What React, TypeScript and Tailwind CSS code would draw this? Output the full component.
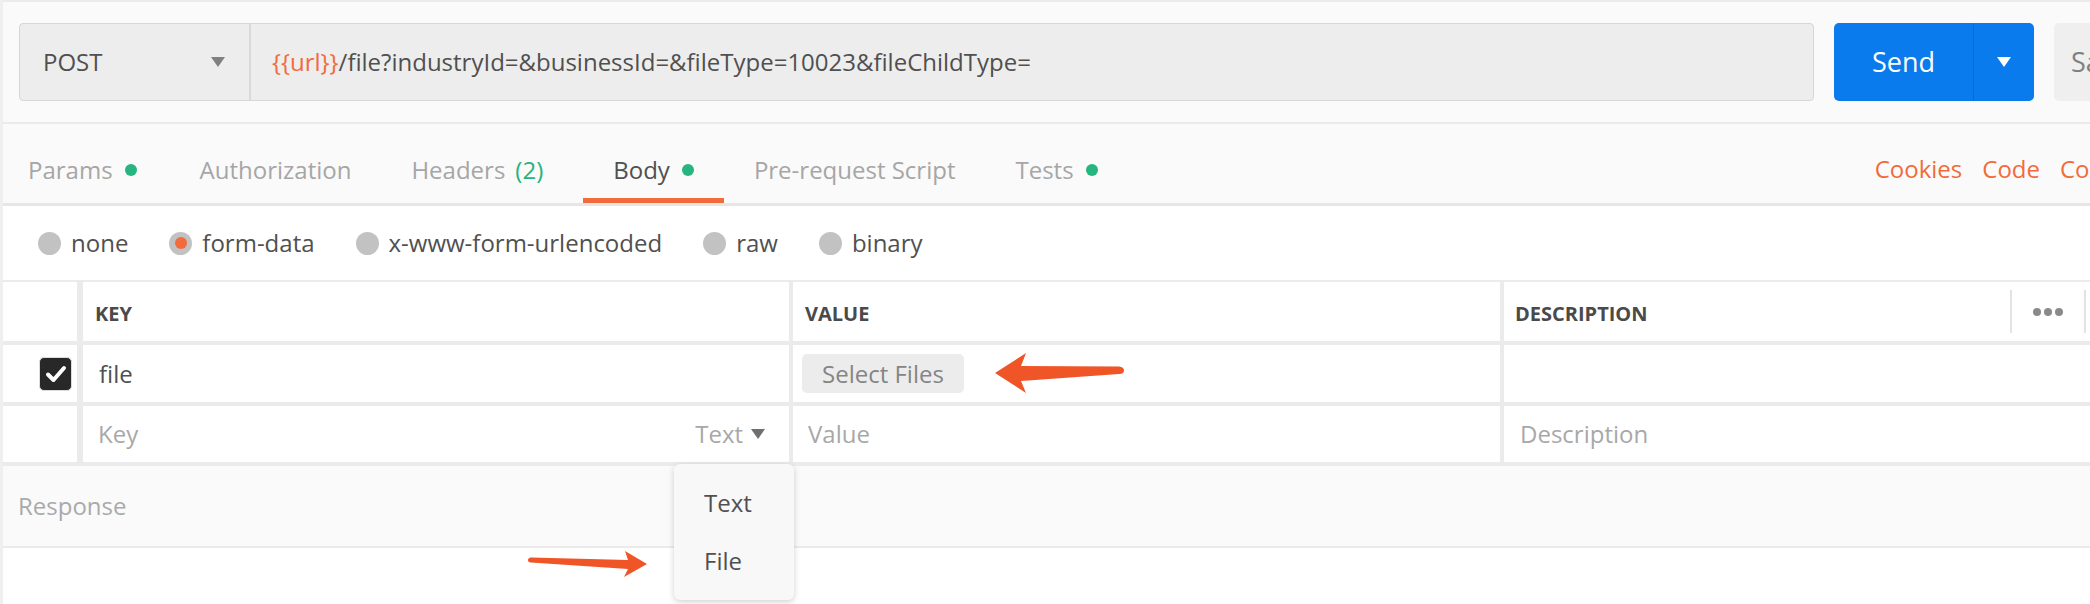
import React from 'react';

const TABS = [
  { label: 'Params', dot: true, extra: 'pl-[28px] pr-[33px]' },
  { label: 'Authorization' },
  { label: 'Headers', count: '(2)', extra: 'pl-[30px] pr-[40px]' },
  { label: 'Body', dot: true, active: true },
  { label: 'Pre-request Script' },
  { label: 'Tests', dot: true },
];

const MODOS = [
  { label: 'none' },
  { label: 'form-data', on: true },
  { label: 'x-www-form-urlencoded' },
  { label: 'raw' },
  { label: 'binary' },
];

function Triangulo({ className = '' }: { className?: string }) {
  return (
    <svg width="14" height="10" viewBox="0 0 14 10" className={className}>
      <polygon points="0,0 14,0 7,10" fill="currentColor" />
    </svg>
  );
}

function Radio({ on }: { on?: boolean }) {
  return (
    <span className="flex size-[23px] items-center justify-center rounded-full bg-[#c2c2c2]">
      {on && <span className="size-[12px] rounded-full bg-[#f26b3a]" />}
    </span>
  );
}

export default function App() {
  return (
    <div className="relative h-[604px] w-[2090px] overflow-hidden bg-white font-['Open_Sans',sans-serif] text-[24px] text-[#505050]">
      {/* barra de la URL */}
      <div className="flex h-[124px] items-start gap-[20px] border-y-2 border-[#ebebeb] bg-[#fafafa] pl-[19px] pt-[21px]">
        <div className="flex h-[78px] w-[1795px] shrink-0 rounded-[4px] border border-[#d6d6d6] bg-[#ededed]">
          <div className="flex w-[231px] items-center justify-between border-r-2 border-[#d9d9d9] pl-[23px] pr-[24px]">
            <span>POST</span>
            <Triangulo className="text-[#808080]" />
          </div>
          <div className="flex items-center pl-[21px] text-[#505050]">
            <span className="text-[#f26b3a]">{'{{url}}'}</span>
            <span>/file?industryId=&amp;businessId=&amp;fileType=10023&amp;fileChildType=</span>
          </div>
        </div>
        <div className="flex h-[78px] w-[200px] shrink-0 overflow-hidden rounded-[5px] bg-[#097bed] text-white">
          <div className="flex w-[139px] items-center justify-center text-[27px]">Send</div>
          <div className="flex flex-1 items-center justify-center border-l border-[#0a6cd0]">
            <Triangulo />
          </div>
        </div>
        <div className="flex h-[78px] w-[100px] shrink-0 items-center rounded-[5px] bg-[#efefef] pl-[17px] text-[27px] text-[#808080]">
          Save
        </div>
      </div>

      {/* pestañas */}
      <div className="flex h-[82px] border-b-[3px] border-[#e6e6e6] bg-[#fafafa]">
        {TABS.map((t) => (
          <div
            key={t.label}
            className={`flex h-full items-center gap-[12px] border-b-[5px] pt-[18px] ${t.extra ?? 'px-[30px]'} ${
              t.active ? 'border-[#f26b3a] text-[#505050]' : 'border-transparent text-[#a6a6a6]'
            }`}
          >
            <span>{t.label}</span>
            {t.count && <span className="-ml-[2px] text-[#26b47f]">{t.count}</span>}
            {t.dot && <span className="size-[12px] rounded-full bg-[#26b47f]" />}
          </div>
        ))}
        <div className="ml-auto flex items-center gap-[20px] pb-[5px] pt-[16px] text-[#f26b3a]">
          <span>Cookies</span>
          <span>Code</span>
          <span className="w-[30px] overflow-hidden whitespace-nowrap">Comments</span>
        </div>
      </div>

      {/* tipo de cuerpo */}
      <div className="flex h-[74px] items-center gap-[41px] pl-[38px]">
        {MODOS.map((m) => (
          <div key={m.label} className="flex items-center gap-[10px]">
            <Radio on={m.on} />
            <span>{m.label}</span>
          </div>
        ))}
      </div>

      {/* tabla clave / valor */}
      <div className="border-t-2 border-[#ebebeb]">
        <div className="grid h-[63px] grid-cols-[77px_712px_711px_1fr] border-b-4 border-[#ebebeb] text-[20px] font-bold text-[#4a4a4a]">
          <div />
          <div className="flex items-center border-l-[6px] border-[#ebebeb] pl-[12px] pt-[4px]">KEY</div>
          <div className="flex items-center border-l-4 border-[#ebebeb] pl-[12px] pt-[4px]">VALUE</div>
          <div className="flex items-center border-l-4 border-[#ebebeb] pl-[11px]">
            <span className="flex-1 pt-[4px]">DESCRIPTION</span>
            <span className="h-[43px] w-[2px] bg-[#e3e3e3]" />
            <span className="flex gap-[3px] px-[21px]">
              <span className="size-[8px] rounded-full bg-[#8a8a8a]" />
              <span className="size-[8px] rounded-full bg-[#8a8a8a]" />
              <span className="size-[8px] rounded-full bg-[#8a8a8a]" />
            </span>
            <span className="mr-[4px] h-[43px] w-[2px] bg-[#e3e3e3]" />
          </div>
        </div>

        <div className="grid h-[61px] grid-cols-[77px_712px_711px_1fr] border-b-4 border-[#ebebeb]">
          <div className="flex items-center justify-end pr-[5px]">
            <span className="flex h-[34px] w-[33px] items-center justify-center rounded-[5px] border border-[#dcdcdc] bg-[#282828]">
              <svg width="22" height="18" viewBox="0 0 22 18">
                <path d="M3 9.5 L8.5 15 L19 3" fill="none" stroke="white" strokeWidth="4" strokeLinecap="round" strokeLinejoin="round" />
              </svg>
            </span>
          </div>
          <div className="flex items-center border-l-[6px] border-[#ebebeb] pl-[16px]">file</div>
          <div className="flex items-center border-l-4 border-[#ebebeb] pl-[9px]">
            <span className="flex h-[39px] items-center rounded-[5px] bg-[#ececec] px-[20px] text-[#858585]">
              Select Files
            </span>
          </div>
          <div className="border-l-4 border-[#ebebeb]" />
        </div>

        <div className="grid h-[60px] grid-cols-[77px_712px_711px_1fr] border-b-4 border-[#ebebeb] text-[#a8a8a8]">
          <div />
          <div className="flex items-center justify-between border-l-[6px] border-[#ebebeb] pl-[15px] pr-[24px]">
            <span>Key</span>
            <span className="flex items-center gap-[8px]">
              Text
              <Triangulo className="text-[#6f6f6f]" />
            </span>
          </div>
          <div className="flex items-center border-l-4 border-[#ebebeb] pl-[15px]">Value</div>
          <div className="flex items-center border-l-4 border-[#ebebeb] pl-[16px]">Description</div>
        </div>
      </div>

      {/* respuesta */}
      <div className="flex h-[82px] items-center border-b-2 border-[#ebebeb] bg-[#fafafa] pl-[18px] text-[#aaaaaa]">
        Response
      </div>

      {/* borde izquierdo de la ventana */}
      <div className="absolute left-0 top-0 h-full w-[3px] bg-[#efefef]" />

      {/* menú desplegable del tipo */}
      <div className="absolute left-[674px] top-[464px] h-[136px] w-[120px] rounded-[6px] bg-[#f8f8f8] pt-[10px] shadow-[0_2px_6px_rgba(0,0,0,0.18)]">
        <div className="flex h-[58px] items-center pl-[30px]">Text</div>
        <div className="flex h-[58px] items-center pl-[30px]">File</div>
      </div>

      {/* flechas de anotación */}
      <svg className="pointer-events-none absolute left-0 top-0" width="2090" height="604">
        <path
          d="M995 373 L1026 353 L1021 366 L1119 366.5 Q1124 367 1124 370.5 Q1124 374 1119 374 L1021 381 L1026 393 Z"
          fill="#ef5527"
        />
        <path
          d="M531 557.5 Q528 558 528 560 Q528 562.5 531 562.5 L628 569 L624 577 L647 564 L625 551 L628 560 Z"
          fill="#ef5527"
        />
      </svg>
    </div>
  );
}
